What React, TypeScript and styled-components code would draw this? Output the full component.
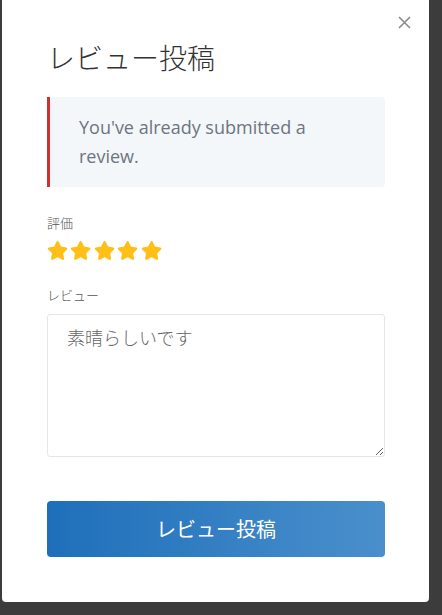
import React from 'react';
import styled, {createGlobalStyle} from "styled-components";
import {FaStar} from "react-icons/fa";

const GlobalStyle = createGlobalStyle`
  html, body {
    margin: 0;
    padding: 0;
    background: #3c3c3c;
  }
  body {
    font-family: "Open Sans", "Noto Sans CJK JP", sans-serif;
  }
`

export default function App() {
    const stars = [1, 2, 3, 4, 5]

    return <Page>
        <GlobalStyle/>
        <Modal>
            <CloseButton aria-label="close">
                <svg width="13" height="13" viewBox="0 0 13 13">
                    <path d="M1 1L12 12M12 1L1 12" stroke="#8a8a8a" strokeWidth="1.6" fill="none"/>
                </svg>
            </CloseButton>

            <Title>レビュー投稿</Title>

            <Notice>You've already submitted a review.</Notice>

            <Label $top={26}>評価</Label>
            <StarRow>
                {stars.map(s => <FaStar key={s}/>)}
            </StarRow>

            <Label $top={25}>レビュー</Label>
            <ReviewText defaultValue="素晴らしいです"/>

            <SubmitButton>レビュー投稿</SubmitButton>
        </Modal>
    </Page>
}

const Page = styled.div`
  display: flex;
  align-items: flex-start;
  min-height: 615px;
  padding-left: 2px;
`
const Modal = styled.div`
  position: relative;
  box-sizing: border-box;
  width: 427px;
  display: flex;
  flex-direction: column;
  background: #fff;
  border-radius: 0 0 4px 4px;
  padding: 40px 44px 45px 45px;
`
const CloseButton = styled.button`
  position: absolute;
  top: 16px;
  right: 18px;
  display: flex;
  padding: 0;
  border: none;
  background: transparent;
  cursor: pointer;
`
const Title = styled.h2`
  margin: 0;
  font-family: "Noto Sans CJK JP", sans-serif;
  font-size: 28px;
  font-weight: 300;
  line-height: 34px;
  color: #333;
`
const Notice = styled.div`
  margin-top: 23px;
  padding: 16px 34px 16px 29px;
  background: #f4f7fa;
  border-left: 3px solid #d32f2f;
  border-radius: 0 4px 4px 0;
  font-size: 18px;
  line-height: 28.8px;
  color: #6c7580;
`
const Label = styled.div<{ $top: number }>`
  margin-top: ${p => p.$top}px;
  font-family: "Noto Sans CJK JP", sans-serif;
  font-size: 13px;
  font-weight: 300;
  line-height: 20px;
  color: #555;
`
const StarRow = styled.div`
  display: flex;
  gap: 2.3px;
  margin-top: 8px;
  height: 19px;

  svg {
    width: 21.2px;
    height: 19px;
    color: #ffbf16;
  }
`
const ReviewText = styled.textarea`
  box-sizing: border-box;
  margin-top: 9px;
  height: 143px;
  width: 100%;
  padding: 9px 19px;
  border: 1px solid #e6e6e6;
  border-radius: 3px;
  font-family: "Noto Sans CJK JP", sans-serif;
  font-size: 18px;
  font-weight: 300;
  line-height: 27px;
  color: #666;
  outline: none;
`
const SubmitButton = styled.button`
  margin-top: 44px;
  height: 56px;
  width: 100%;
  border: none;
  border-radius: 4px;
  background: linear-gradient(90deg, #1e6fba 0%, #4a8fcc 100%);
  color: #fff;
  font-family: "Noto Sans CJK JP", sans-serif;
  font-size: 20px;
  font-weight: 400;
  cursor: pointer;
`
